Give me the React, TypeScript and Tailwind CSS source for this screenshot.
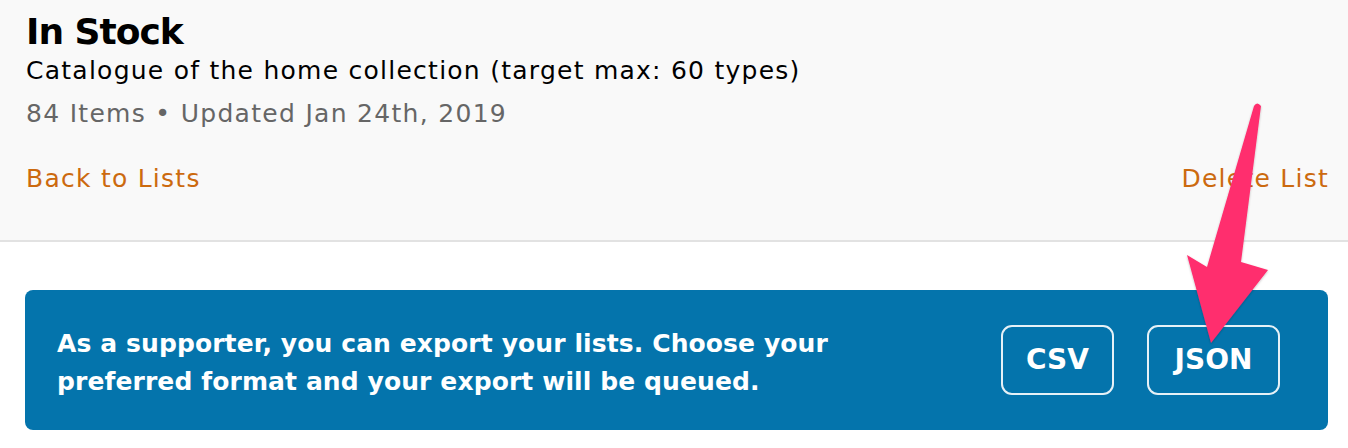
import React from "react";

const Arrow = () => (
  <svg
    className="absolute left-0 top-0 pointer-events-none"
    width="1348"
    height="448"
    viewBox="0 0 1348 448"
  >
    <defs>
      <filter id="sh" x="-20%" y="-20%" width="140%" height="140%">
        <feDropShadow dx="0" dy="1" stdDeviation="1.2" floodColor="#000" floodOpacity="0.25" />
      </filter>
    </defs>
    <path
      d="M1254 106 Q1257 101 1261 106 L1241 262 L1268 270 L1211 343 L1187 255 L1207 267 Z"
      fill="#ff2d6e"
      filter="url(#sh)"
    />
  </svg>
);

export default function App() {
  return (
    <div className="relative w-[1348px] h-[448px] overflow-hidden bg-white font-['DejaVu_Sans',sans-serif]">
      <div className="bg-[#f9f9f9] border-b-2 border-[#e2e2e2] pl-[26px] pr-[20px] pt-[10px] h-[242px]">
        <h1 className="text-[36px] font-bold leading-[44px] tracking-[-1px] text-black">In Stock</h1>
        <p className="text-[25px] leading-[34px] tracking-[1.25px] text-black">
          Catalogue of the home collection (target max: 60 types)
        </p>
        <p className="text-[25px] leading-[34px] tracking-[1.3px] mt-[9px] text-[#666]">
          84 Items • Updated Jan 24th, 2019
        </p>
        <div className="flex justify-between mt-[31px] text-[25px] leading-[34px] tracking-[1.25px] text-[#cc6a0f]">
          <a>Back to Lists</a>
          <a className="mr-[-1px]">Delete List</a>
        </div>
      </div>
      <div className="pl-[25px] pr-[20px] pt-[48px]">
        <div className="flex items-center justify-between h-[140px] rounded-[8px] bg-[#0474ac] pl-[32px] pr-[48px]">
          <p className="mt-[5px] text-[25px] leading-[38px] font-bold tracking-[0.1px] text-white">
            As a supporter, you can export your lists. Choose your
            <br />
            preferred format and your export will be queued.
          </p>
          <div className="flex gap-[33px]">
            <button className="w-[113px] h-[70px] rounded-[11px] border-2 border-white/90 text-white text-[28px] font-bold">
              CSV
            </button>
            <button className="w-[133px] h-[70px] rounded-[11px] border-2 border-white/90 text-white text-[28px] font-bold">
              JSON
            </button>
          </div>
        </div>
      </div>
      <Arrow />
    </div>
  );
}
